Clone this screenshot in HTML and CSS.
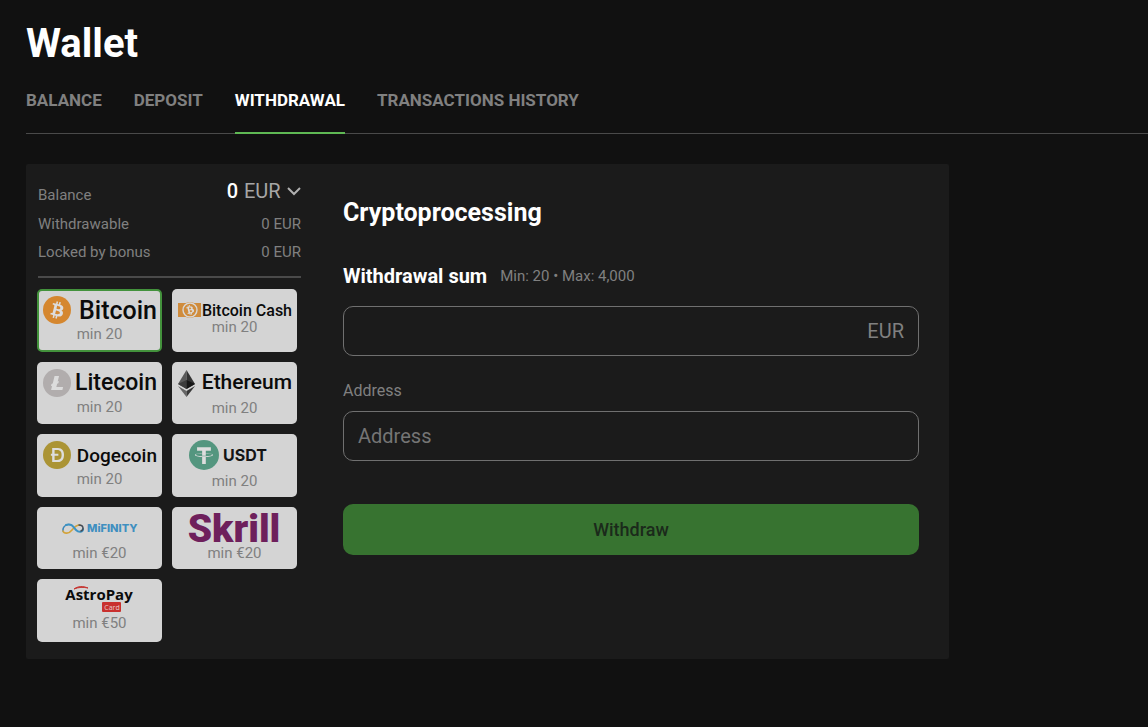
FILE: index.html
```html
<!DOCTYPE html>
<html lang="en">
    <head>
        <meta charset="utf-8">
        <title>Wallet</title>
        <meta name="viewport" content="width=device-width, initial-scale=1.0">
        <link rel="stylesheet" href="styles.css">
    </head>
    <body>
        <main class="wallet">
            <h1>Wallet</h1>
            <nav class="tabs">
                <a href="#balance">Balance</a>
                <a href="#deposit">Deposit</a>
                <a href="#withdrawal" class="active">Withdrawal</a>
                <a href="#history">Transactions history</a>
            </nav>
            <div class="panel">
                <div class="sidebar">
                    <div class="balance">
                        <div class="row total">
                            <label for="currency">Balance</label>
                            <div class="amount">
                                <span>0</span>
                                <select id="currency">
                                    <option>EUR</option>
                                </select>
                                <svg class="chevron" width="14" height="10" viewBox="0 0 14 10"><path d="M1 2l6 6 6-6" fill="none" stroke="#b0b0b0" stroke-width="2"/></svg>
                            </div>
                        </div>
                        <div class="row"><span>Withdrawable</span><span>0 EUR</span></div>
                        <div class="row"><span>Locked by bonus</span><span>0 EUR</span></div>
                    </div>
                    <div class="methods">
                        <button type="button" class="method selected">
                            <svg width="113" height="30">
                                <circle cx="14" cy="15" r="14" fill="#d5872f"/>
                                <svg y="1" width="28" height="28" viewBox="0 0 32 32"><path fill="#ddd" d="M23.189 14.02c.314-2.096-1.283-3.223-3.465-3.975l.708-2.84-1.728-.43-.69 2.765c-.454-.114-.92-.22-1.385-.326l.695-2.783L15.596 6l-.708 2.839c-.376-.086-.746-.17-1.104-.26l.002-.009-2.384-.595-.46 1.846s1.283.294 1.256.312c.7.175.826.638.805 1.006l-.806 3.235c.048.012.11.03.18.057l-.183-.045-1.13 4.532c-.086.212-.303.531-.793.41.018.025-1.256-.313-1.256-.313l-.858 1.978 2.25.561c.418.105.828.215 1.231.318l-.715 2.872 1.727.43.708-2.84c.472.127.93.245 1.378.357l-.706 2.828 1.728.43.715-2.866c2.948.558 5.164.333 6.097-2.333.752-2.146-.037-3.385-1.588-4.192 1.13-.26 1.98-1.003 2.207-2.538zm-3.95 5.538c-.533 2.147-4.148.986-5.32.695l.95-3.805c1.172.293 4.929.872 4.37 3.11zm.535-5.569c-.487 1.953-3.495.96-4.47.717l.86-3.45c.975.243 4.118.696 3.61 2.733z"/></svg>
                                <text x="114" y="24" font-size="25" class="name">Bitcoin</text>
                            </svg>
                            <span>min 20</span>
                        </button>
                        <button type="button" class="method">
                            <svg width="113" height="23">
                                <rect y="8" width="23" height="14" fill="#d08c3c"/>
                                <circle cx="12" cy="15" r="8" fill="#d08c3c"/>
                                <circle cx="12" cy="15" r="7" fill="none" stroke="#d8d8d8" stroke-width="1.4"/>
                                <svg x="4" y="7" width="16" height="16" viewBox="0 0 32 32"><path transform="rotate(-28 16 16)" fill="#ddd" d="M23.189 14.02c.314-2.096-1.283-3.223-3.465-3.975l.708-2.84-1.728-.43-.69 2.765c-.454-.114-.92-.22-1.385-.326l.695-2.783L15.596 6l-.708 2.839c-.376-.086-.746-.17-1.104-.26l.002-.009-2.384-.595-.46 1.846s1.283.294 1.256.312c.7.175.826.638.805 1.006l-.806 3.235-1.133 4.544c-.086.212-.303.531-.793.41l-1.256-.313-.858 1.978 2.25.561 1.231.318-.715 2.872 1.727.43.708-2.84 1.378.357-.706 2.828 1.728.43.715-2.866c2.948.558 5.164.333 6.097-2.333.752-2.146-.037-3.385-1.588-4.192 1.13-.26 1.98-1.003 2.207-2.538zm-3.95 5.538c-.533 2.147-4.148.986-5.32.695l.95-3.805c1.172.293 4.929.872 4.37 3.11zm.535-5.569c-.487 1.953-3.495.96-4.47.717l.86-3.45c.975.243 4.118.696 3.61 2.733z"/></svg>
                                <text x="114" y="21" font-size="16" class="name">Bitcoin Cash</text>
                            </svg>
                            <span>min 20</span>
                        </button>
                        <button type="button" class="method">
                            <svg width="113" height="30">
                                <circle cx="14" cy="15" r="14" fill="#b1adad"/>
                                <svg y="1" width="28" height="28" viewBox="0 0 32 32"><path fill="#dcdcdc" d="M10.427 19.214L9 19.768l.688-2.759 1.444-.58L13.213 8h5.129l-1.519 6.196 1.41-.571-.68 2.75-1.427.571-.848 3.483H23L22.127 24H9.252z"/></svg>
                                <text x="114" y="22" font-size="23" class="name">Litecoin</text>
                            </svg>
                            <span>min 20</span>
                        </button>
                        <button type="button" class="method">
                            <svg width="113" height="31">
                                <path fill="#5a5a5a" d="M8.500 2L0 16l8.500 5z"/>
                                <path fill="#333" d="M8.500 2L17 16l-8.500 5z"/>
                                <path fill="#3c3c3c" d="M8.500 12L0 16l8.500 5z"/>
                                <path fill="#161616" d="M8.500 12l8.500 4-8.500 5z"/>
                                <path fill="#666" d="M0 18l8.500 5v6z"/>
                                <path fill="#383838" d="M17 18l-8.500 5v6z"/>
                                <text x="114" y="21" font-size="21" class="name">Ethereum</text>
                            </svg>
                            <span>min 20</span>
                        </button>
                        <button type="button" class="method">
                            <svg width="113" height="30">
                                <circle cx="14" cy="15" r="14" fill="#ab9435"/>
                                <svg y="1" width="28" height="28" viewBox="0 0 32 32"><path fill="#ddd" d="M13.248 14.61h4.314v2.286h-4.314v4.818h2.721c1.077 0 1.958-.145 2.644-.437.686-.291 1.224-.694 1.615-1.21a4.4 4.4 0 00.796-1.815 11.4 11.4 0 00.22-2.252 11.4 11.4 0 00-.22-2.252 4.396 4.396 0 00-.796-1.815c-.391-.516-.93-.919-1.615-1.21-.686-.292-1.567-.437-2.644-.437h-2.721v4.325zm-2.766 2.286H9v-2.285h1.482V8h6.549c1.21 0 2.257.21 3.142.627.885.419 1.607.99 2.168 1.715.56.724.977 1.572 1.25 2.543.273.971.409 2.010.409 3.115a11.47 11.47 0 01-.41 3.115c-.272.97-.689 1.819-1.25 2.543-.56.725-1.282 1.296-2.167 1.715-.885.418-1.933.627-3.142.627h-6.549v-7.104z"/></svg>
                                <text x="114" y="22" font-size="19" class="name">Dogecoin</text>
                            </svg>
                            <span>min 20</span>
                        </button>
                        <button type="button" class="method">
                            <svg width="113" height="32">
                                <circle cx="26" cy="15" r="15" fill="#54967f"/>
                                <svg x="11" width="30" height="30" viewBox="0 0 32 32"><path fill="#ddd" d="M17.922 17.383v-.002c-.11.008-.677.042-1.942.042-1.010 0-1.721-.03-1.971-.042v.003c-3.888-.171-6.79-.848-6.79-1.658 0-.809 2.902-1.486 6.79-1.66v2.644c.254.018.982.061 1.988.061 1.207 0 1.812-.05 1.925-.06v-2.643c3.88.173 6.775.85 6.775 1.658 0 .81-2.895 1.485-6.775 1.657m0-3.59v-2.366h5.414V7.819H8.595v3.608h5.414v2.365c-4.4.202-7.709 1.074-7.709 2.118 0 1.044 3.309 1.915 7.709 2.118v7.582h3.913v-7.584c4.393-.202 7.694-1.073 7.694-2.116 0-1.043-3.301-1.914-7.694-2.117"/></svg>
                                <text x="45" y="21" font-size="16" class="usdt">USDT</text>
                            </svg>
                            <span>min 20</span>
                        </button>
                        <button type="button" class="method">
                            <svg width="113" height="31">
                                <g fill="none" stroke-linecap="round">
                                    <path d="M20 18c-1-4 4-8 8-6" stroke="#3c87b8" stroke-width="1.300"/>
                                    <path d="M20 18c1 3 6 3 9-1 3-4 5-5 8-5" stroke="#d3a33a" stroke-width="1.600"/>
                                    <path d="M23 12c5-2 7 1 10 5 3 3 7 2 7-1" stroke="#3c93c4" stroke-width="2"/>
                                    <path d="M36 12c5 0 5 5 2 6" stroke="#444c56" stroke-width="1.400"/>
                                </g>
                                <text x="44" y="19" font-size="11" class="mifinity">MiFINITY</text>
                            </svg>
                            <span>min €20</span>
                        </button>
                        <button type="button" class="method">
                            <svg width="113" height="31">
                                <text x="56" y="29" font-size="39" class="skrill">Skrill</text>
                            </svg>
                            <span>min €20</span>
                        </button>
                        <button type="button" class="method">
                            <svg width="113" height="29">
                                <text x="56" y="15" font-size="15" class="astropay">AstroPay</text>
                                <path d="M31 4c4-3 9-3 14-1-5-1-9-1-14 1z" fill="#c63632" stroke="#c63632"/>
                                <rect x="59" y="17" width="19" height="10" rx="1" fill="#c9302e"/>
                                <text x="69" y="25" font-size="7" class="card">Card</text>
                            </svg>
                            <span>min €50</span>
                        </button>
                    </div>
                </div>
                <form class="withdraw">
                    <h2>Cryptoprocessing</h2>
                    <div class="sum">
                        <label for="sum">Withdrawal sum</label>
                        <span>Min: 20 • Max: 4,000</span>
                    </div>
                    <div class="field">
                        <input type="text" id="sum" inputmode="decimal">
                        <span>EUR</span>
                    </div>
                    <label class="address" for="address">Address</label>
                    <div class="field">
                        <input type="text" id="address" placeholder="Address">
                    </div>
                    <button type="submit" class="submit">Withdraw</button>
                </form>
            </div>
        </main>
        <script>
            const methods = document.querySelectorAll('.method');

            methods.forEach(method => {
              method.onclick = function () {
                methods.forEach(element => element.classList.remove('selected'));
                method.classList.add('selected');
              };
            });

            document.querySelector('.withdraw').onsubmit = event => event.preventDefault();
        </script>
    </body>
</html>
```
FILE: styles.css
```css
* {
    box-sizing: border-box;
}

body {
    margin: 0;
    background-color: #111;
    color: #808080;
    font-family: Roboto, sans-serif;
    font-size: 15px;
}

button, input, select {
    font-family: inherit;
}

.wallet {
    padding: 21px 0 20px 26px;
}

h1 {
    margin: 0 0 22px;
    color: #fff;
    font-size: 40px;
    line-height: 46px;
}

.tabs {
    display: flex;
    gap: 32px;
    border-bottom: 1px solid #4a4a4a;
}

.tabs a {
    margin-bottom: -1px;
    padding-bottom: 21px;
    border-bottom: 2px solid transparent;
    color: #808080;
    font-size: 17px;
    font-weight: bold;
    line-height: 22px;
    text-decoration: none;
    text-transform: uppercase;
}

.tabs a.active {
    color: #fff;
    border-color: #5fb954;
}

.panel {
    display: flex;
    gap: 42px;
    max-width: 923px;
    margin-top: 30px;
    padding: 10px 30px 17px 11px;
    border-radius: 2px;
    background-color: #1b1b1b;
}

.sidebar {
    width: 264px;
}

.balance {
    margin: 0 0 11px 1px;
    padding-bottom: 10px;
    border-bottom: 2px solid #4a4a4a;
}

.row {
    display: flex;
    justify-content: space-between;
    line-height: 28px;
}

.total {
    height: 36px;
    align-items: flex-end;
    line-height: 30px;
}

.amount {
    position: relative;
    display: flex;
    align-items: center;
    align-self: flex-start;
    gap: 6px;
    height: 34px;
    color: #fff;
    font-size: 20px;
    font-weight: 500;
}

.amount select {
    width: 57px;
    padding: 0;
    border: 0;
    background: none;
    color: #a6a6a6;
    font-size: 20px;
    appearance: none;
}

.chevron {
    position: absolute;
    right: 0;
    pointer-events: none;
}

.methods {
    display: grid;
    grid-template-columns: 125px 125px;
    gap: 10px;
}

.method {
    display: flex;
    flex-direction: column;
    align-items: center;
    aspect-ratio: 2 / 1;
    padding: 4px;
    border: 2px solid transparent;
    border-radius: 5px;
    background-color: #d4d4d4;
    color: #808080;
    font-size: 15px;
    line-height: 18px;
    cursor: pointer;
}

.method.selected {
    border-color: #43923c;
}

.method svg {
    flex-shrink: 0;
    overflow: visible;
}

.name {
    fill: #0b0b0b;
    font-weight: 500;
    text-anchor: end;
}

.usdt {
    fill: #141414;
    font-family: Inter, sans-serif;
    font-weight: bold;
}

.mifinity {
    fill: #3f8fc0;
    font-family: Inter, sans-serif;
    font-weight: 800;
}

.skrill {
    fill: #6e205c;
    font-weight: 900;
    text-anchor: middle;
}

.astropay {
    fill: #0b0b0b;
    font-family: "Open Sans", sans-serif;
    font-weight: bold;
    text-anchor: middle;
}

.card {
    fill: #e4caca;
    font-family: "Open Sans", sans-serif;
    text-anchor: middle;
}

.withdraw {
    flex: 1;
    padding-top: 24px;
}

h2 {
    margin: 0 0 36px;
    color: #fff;
    font-size: 25px;
    line-height: 30px;
}

.sum {
    display: flex;
    align-items: center;
    gap: 13px;
    margin-bottom: 18px;
    line-height: 24px;
}

.sum label {
    color: #fff;
    font-size: 20px;
    font-weight: bold;
}

.field {
    display: flex;
    align-items: center;
    height: 50px;
    padding: 0 14px;
    border: 1px solid #707070;
    border-radius: 10px;
    font-size: 20px;
}

.field input {
    flex: 1;
    height: 100%;
    padding: 0;
    border: 0;
    outline: 0;
    background: none;
    color: #fff;
    font-size: 20px;
}

.field input::placeholder {
    color: #757575;
}

.address {
    display: block;
    margin: 25px 0 10px;
    font-size: 16px;
    line-height: 20px;
}

.submit {
    width: 100%;
    height: 51px;
    margin-top: 43px;
    border: 0;
    border-radius: 10px;
    background-color: #377330;
    color: #1b2a1b;
    font-size: 18px;
    font-weight: 500;
    cursor: pointer;
}
```
